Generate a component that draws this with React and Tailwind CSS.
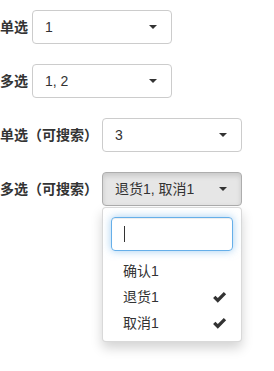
import React from 'react';

const font = { fontFamily: '"Liberation Sans", "Noto Sans CJK SC", sans-serif' };

const Caret = () => (
    <span className="inline-block w-0 h-0 border-l-4 border-r-4 border-t-4 border-l-transparent border-r-transparent border-t-[#333]" />
);

const CheckMark = () => (
    <svg width="15" height="13" viewBox="0 0 14 12" className="text-[#333]">
        <path d="M1 6.5 L3.2 4.3 L5.4 6.5 L11 0.8 L13.2 3 L5.4 10.8 Z" fill="currentColor" />
    </svg>
);

const SelectButton = ({ value, active }) => (
    <button
        className={
            'w-[140px] h-[34px] flex items-center justify-between pl-3 pr-[14px] rounded border text-sm text-[#333] ' +
            (active
                ? 'bg-[#e6e6e6] border-[#adadad] shadow-[inset_0_3px_5px_rgba(0,0,0,0.125)]'
                : 'bg-white border-[#ccc]')
        }
    >
        <span className="truncate">{value}</span>
        <Caret />
    </button>
);

const Row = ({ label, children }) => (
    <div className="flex items-center gap-1">
        <label className="text-sm font-bold text-[#333] whitespace-nowrap">{label}</label>
        {children}
    </div>
);

export default function App() {
    const options = [
        { label: '确认1', checked: false },
        { label: '退货1', checked: true },
        { label: '取消1', checked: true },
    ];

    return (
        <div className="w-[274px] h-[371px] bg-white pt-[10px] flex flex-col gap-5" style={font}>
            <Row label="单选">
                <SelectButton value="1" />
            </Row>
            <Row label="多选">
                <SelectButton value="1, 2" />
            </Row>
            <Row label="单选（可搜索）">
                <SelectButton value="3" />
            </Row>
            <Row label="多选（可搜索）">
                <div className="relative">
                    <SelectButton value="退货1, 取消1" active />
                    {/* Open dropdown */}
                    <div className="absolute left-0 top-full mt-[1px] w-[140px] bg-white border border-black/15 rounded shadow-[0_6px_12px_rgba(0,0,0,0.175)] py-[5px] z-10">
                        <div className="px-2 py-1">
                            <div className="h-[34px] rounded border border-[#66afe9] shadow-[inset_0_1px_1px_rgba(0,0,0,0.075),0_0_8px_rgba(102,175,233,0.6)] flex items-center px-3">
                                <span className="w-px h-[16px] bg-[#333]" />
                            </div>
                        </div>
                        <ul className="mt-[3px]">
                            {options.map((opt) => (
                                <li key={opt.label} className="flex items-center justify-between pl-5 pr-[14px] h-[26px] text-sm text-[#333]">
                                    <span>{opt.label}</span>
                                    {opt.checked && <CheckMark />}
                                </li>
                            ))}
                        </ul>
                    </div>
                </div>
            </Row>
        </div>
    );
}
